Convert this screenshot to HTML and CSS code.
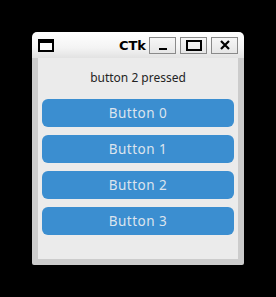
FILE: index.html
```html
<!DOCTYPE html>
<html lang="en">

<head>
    <meta charset="UTF-8">
    <title>CTk</title>
    <link rel="stylesheet" href="styles.css">
</head>

<body>
    <div class="window">
        <div class="titlebar">
            <span class="app-icon"></span>
            <span class="title">CTk</span>
            <div class="controls">
                <span class="ctl"><span class="ico-min"></span></span>
                <span class="ctl"><span class="ico-max"></span></span>
                <span class="ctl">
                    <svg width="12" height="12" viewBox="0 0 12 12">
                        <path d="M2 2 L10 10 M10 2 L2 10" stroke="#000" stroke-width="2.2" fill="none" />
                    </svg>
                </span>
            </div>
        </div>
        <div class="frame">
            <div class="content">
                <p class="status">button 2 pressed</p>
                <div class="buttons">
                    <button class="ctk-btn">Button 0</button>
                    <button class="ctk-btn">Button 1</button>
                    <button class="ctk-btn">Button 2</button>
                    <button class="ctk-btn">Button 3</button>
                </div>
            </div>
        </div>
    </div>
</body>

</html>
```

FILE: styles.css
```css
:root {
    --btn-color: #3b8ed0;
    --btn-text: #dce4ee;
    --frame-bg: #ebebeb;
    --border-color: #cccccc;
    --label-color: #242424;
}

body {
    margin: 0;
    background-color: #000;
    padding: 32px 0 0 32px;
    font-family: 'Noto Sans', sans-serif;
}

.window {
    width: 212px;
    height: 233px;
    display: flex;
    flex-direction: column;
    border-radius: 5px 5px 2px 2px;
    overflow: hidden;
}

.titlebar {
    height: 26px;
    display: flex;
    align-items: center;
    padding: 0 6px;
    background: linear-gradient(#ffffff, #f4f4f4 60%, #e2e2e2);
}

.app-icon {
    width: 12px;
    height: 7px;
    border: 2px solid #000;
    border-top-width: 4px;
    background-color: #fff;
    margin-top: 1px;
}

.title {
    margin-left: auto;
    margin-right: 3px;
    font-family: 'DejaVu Sans', sans-serif;
    font-weight: bold;
    font-size: 13px;
    color: #000;
}

.controls {
    display: flex;
    gap: 4px;
}

.ctl {
    width: 25px;
    height: 15px;
    border: 1px solid #8a8a8a;
    background: linear-gradient(#f6f6f6, #e6e6e6);
    display: flex;
    align-items: center;
    justify-content: center;
}

.ico-min {
    width: 8px;
    height: 2px;
    background-color: #000;
    margin-top: 8px;
}

.ico-max {
    width: 12px;
    height: 7px;
    border: 2px solid #000;
}

.frame {
    flex: 1;
    background-color: var(--border-color);
    padding: 0 6px 6px 6px;
    display: flex;
}

.content {
    flex: 1;
    background-color: var(--frame-bg);
    display: flex;
    flex-direction: column;
    padding: 8px 4px 0 4px;
}

.status {
    margin: 0;
    height: 24px;
    line-height: 24px;
    text-align: center;
    font-size: 12px;
    color: var(--label-color);
}

.buttons {
    display: flex;
    flex-direction: column;
    gap: 8px;
    margin-top: 9px;
}

.ctk-btn {
    height: 28px;
    border: none;
    border-radius: 6px;
    background-color: var(--btn-color);
    color: var(--btn-text);
    font-family: 'Noto Sans', sans-serif;
    font-size: 13.5px;
    letter-spacing: 0.5px;
    padding: 0;
}
```
